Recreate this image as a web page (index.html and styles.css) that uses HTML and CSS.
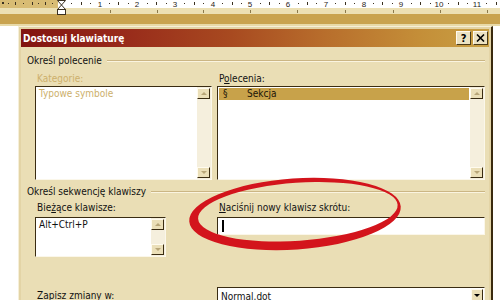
FILE: index.html
```html
<!DOCTYPE html>
<html lang="pl">
<head>
<meta charset="utf-8">
<title>Dostosuj klawiaturę</title>
<link rel="stylesheet" href="styles.css">
</head>
<body>
<svg class="ruler" width="500" height="26" viewBox="0 0 500 26">
  <rect width="500" height="8" fill="#ffffff"/>
  <rect width="58" height="8" fill="#d8bc74"/>
  <rect y="8" width="500" height="6" fill="#ece0b4"/>
  <rect y="14" width="500" height="10" fill="#c9a34f"/>
  <rect y="24" width="500" height="2" fill="#e8daa8"/>
  <g fill="#3a3020">
    <rect x="2" y="2" width="2" height="2"/>
    <rect x="8" y="3" width="1" height="1"/><rect x="15" y="2" width="1" height="3"/><rect x="23" y="3" width="1" height="1"/>
    <rect x="32" y="2" width="1" height="3"/><rect x="38" y="3" width="1" height="1"/><rect x="45" y="2" width="1" height="3"/><rect x="52" y="3" width="1" height="1"/>
    <rect x="71" y="3" width="1" height="1"/><rect x="81" y="2" width="1" height="3"/><rect x="90" y="3" width="1" height="1"/>
    <rect x="109" y="3" width="1" height="1"/><rect x="118" y="2" width="1" height="3"/><rect x="128" y="3" width="1" height="1"/>
    <rect x="147" y="3" width="1" height="1"/><rect x="156" y="2" width="1" height="3"/><rect x="166" y="3" width="1" height="1"/>
    <rect x="184" y="3" width="1" height="1"/><rect x="194" y="2" width="1" height="3"/><rect x="203" y="3" width="1" height="1"/>
    <rect x="222" y="3" width="1" height="1"/><rect x="232" y="2" width="1" height="3"/><rect x="241" y="3" width="1" height="1"/>
    <rect x="260" y="3" width="1" height="1"/><rect x="269" y="2" width="1" height="3"/><rect x="279" y="3" width="1" height="1"/>
    <rect x="298" y="3" width="1" height="1"/><rect x="307" y="2" width="1" height="3"/><rect x="316" y="3" width="1" height="1"/>
    <rect x="335" y="3" width="1" height="1"/><rect x="345" y="2" width="1" height="3"/><rect x="354" y="3" width="1" height="1"/>
    <rect x="373" y="3" width="1" height="1"/><rect x="382" y="2" width="1" height="3"/><rect x="392" y="3" width="1" height="1"/>
    <rect x="411" y="3" width="1" height="1"/><rect x="420" y="2" width="1" height="3"/><rect x="430" y="3" width="1" height="1"/>
    <rect x="448" y="3" width="1" height="1"/><rect x="458" y="2" width="1" height="3"/><rect x="467" y="3" width="1" height="1"/>
    <rect x="486" y="3" width="1" height="1"/><rect x="496" y="2" width="1" height="3"/>
  </g>
  <g fill="#8c7a4c">
    <rect x="110" y="10" width="1" height="3"/><rect x="157" y="10" width="1" height="3"/><rect x="203" y="10" width="1" height="3"/>
    <rect x="250" y="10" width="1" height="3"/><rect x="297" y="10" width="1" height="3"/><rect x="345" y="10" width="1" height="3"/>
    <rect x="393" y="10" width="1" height="3"/><rect x="440" y="10" width="1" height="3"/><rect x="487" y="10" width="1" height="3"/>
  </g>
  <g class="rnum" fill="#2a2418" text-anchor="middle">
    <text x="100" y="7">1</text><text x="137" y="7">2</text><text x="175" y="7">3</text><text x="213" y="7">4</text>
    <text x="250" y="7">5</text><text x="288" y="7">6</text><text x="326" y="7">7</text><text x="364" y="7">8</text>
    <text x="401" y="7">9</text><text x="439" y="7">10</text><text x="477" y="7">11</text>
  </g>
  <g fill="#ffffff" stroke="#3a3020" stroke-width="1">
    <polygon points="57.5,0.5 65.5,0.5 61.5,5"/>
    <polygon points="57.5,9.5 65.5,9.5 61.5,5"/>
    <rect x="57.5" y="9.5" width="8" height="5"/>
  </g>
</svg>
<div class="page">
  <div class="dialog">
    <div class="titlebar">
      <span class="title">Dostosuj klawiaturę</span>
      <div class="tbtns">
        <span class="tbtn">?</span>
        <span class="tbtn"><svg width="9" height="8" viewBox="0 0 9 8"><path d="M1 0.5 L8 7.5 M8 0.5 L1 7.5" stroke="#000" stroke-width="1.6"/></svg></span>
      </div>
    </div>
    <div class="body">
      <div class="sep"><span>Określ polecenie</span></div>
      <div class="row row1">
        <div class="col">
          <div class="label disabled">Kategorie:</div>
          <div class="list cat">
            <div class="items"><div class="item disabled">Typowe symbole</div></div>
            <div class="vscroll"><span class="sbtn up"></span><span class="strack"></span><span class="sbtn down"></span></div>
          </div>
        </div>
        <div class="col">
          <div class="label">P<u>o</u>lecenia:</div>
          <div class="list cmd">
            <div class="items"><div class="item sel"><span class="sym">§</span><span>Sekcja</span></div></div>
            <div class="vscroll"><span class="sbtn up"></span><span class="strack"></span><span class="sbtn down"></span></div>
          </div>
        </div>
      </div>
      <div class="sep sep2"><span>Określ sekwencję klawiszy</span></div>
      <div class="row row2">
        <div class="col">
          <div class="label">Bie<u>ż</u>ące klawisze:</div>
          <div class="list keys">
            <div class="items"><div class="item">Alt+Ctrl+P</div></div>
            <div class="vscroll"><span class="sbtn up"></span><span class="strack"></span><span class="sbtn down"></span></div>
          </div>
        </div>
        <div class="col">
          <div class="label"><u>N</u>aciśnij nowy klawisz skrótu:</div>
          <div class="input"><span class="caret"></span></div>
        </div>
      </div>
      <div class="row row3">
        <div class="col">
          <div class="label save">Zapisz zmiany w:</div>
        </div>
        <div class="col">
          <div class="combo"><span class="ctext">Normal.dot</span><span class="cbtn"></span></div>
        </div>
      </div>
    </div>
  </div>
</div>
<svg class="mark" width="500" height="300" viewBox="0 0 500 300">
  <path fill="#d3141c" fill-rule="evenodd" transform="rotate(-4 295 214)" d="M189,214 a106,35.5 0 1,0 212,0 a106,35.5 0 1,0 -212,0 Z M198,212 a100,29 0 1,0 200,0 a100,29 0 1,0 -200,0 Z"/>
</svg>
</body>
</html>
```
FILE: styles.css
```css
html, body {
  margin: 0;
  padding: 0;
}
body {
  width: 500px;
  height: 300px;
  overflow: hidden;
  position: relative;
  background: #ffffff;
  font-family: "DejaVu Sans Condensed", "Liberation Sans", Arial, sans-serif;
  font-size: 10px;
  color: #111;
}
.ruler {
  display: block;
}
.rnum {
  font-family: "Liberation Sans", Arial, sans-serif;
  font-size: 8px;
}
.page {
  padding-left: 18px;
}
.dialog {
  width: 475px;
  height: 274px;
  box-sizing: border-box;
  border-left: 1px solid #f6efd8;
  border-top: 1px solid #f6efd8;
  border-right: 2px solid #3a2a0e;
  background: #e3d4a6;
  padding: 2px 2px 0 2px;
  display: flex;
  flex-direction: column;
}
.titlebar {
  height: 18px;
  flex: none;
  display: flex;
  align-items: center;
  padding-left: 2px;
  background: linear-gradient(to right, #821410 0%, #97281a 20%, #a84a20 45%, #b86e2c 65%, #c48e38 85%, #c9a044 100%);
}
.title {
  color: #ffffff;
  font-weight: bold;
  font-size: 10px;
}
.tbtns {
  margin-left: auto;
  margin-right: 1px;
  display: flex;
  gap: 2px;
}
.tbtn {
  width: 15px;
  height: 14px;
  box-sizing: border-box;
  background: #ece2c2;
  border: 1px solid;
  border-color: #fffaf0 #4a3a18 #4a3a18 #fffaf0;
  display: flex;
  align-items: center;
  justify-content: center;
  font-weight: bold;
  font-size: 11px;
  color: #000;
}
.body {
  flex: 1;
  background: #eadeb5;
  padding: 7px 4px 0 6px;
  overflow: hidden;
}
.sep {
  display: flex;
  align-items: center;
  gap: 5px;
  line-height: 13px;
  height: 13px;
}
.sep::after {
  content: "";
  flex: 1;
  border-top: 1px solid #cbb684;
  border-bottom: 1px solid #faf4e0;
}
.sep2 {
  margin-top: 5px;
}
.row {
  display: grid;
  grid-template-columns: 182px 268px;
  margin-left: 8px;
}
.row1 {
  margin-top: 5px;
}
.row2 {
  margin-top: 3px;
}
.row3 {
  margin-top: 30px;
}
.label {
  line-height: 13px;
  height: 13px;
  padding-left: 2px;
  margin-bottom: 1px;
  white-space: nowrap;
}
.row2 .label {
  margin-bottom: 3px;
}
.label.save {
  padding-top: 2px;
}
.disabled {
  color: #cdb06c;
}
.list {
  display: flex;
  box-sizing: border-box;
  border: 1px solid;
  border-color: #3a2c12 #fbf7ea #fbf7ea #3a2c12;
  background: #ffffff;
}
.cat {
  width: 177px;
  height: 94px;
}
.cmd {
  width: 268px;
  height: 94px;
}
.keys {
  width: 131px;
  height: 40px;
}
.items {
  flex: 1;
  padding: 1px;
}
.item {
  line-height: 12px;
  height: 12px;
  padding-left: 2px;
  white-space: nowrap;
}
.item.sel {
  background: #c8a24a;
  display: flex;
  padding-left: 4px;
  color: #1a1408;
}
.sym {
  width: 24px;
}
.vscroll {
  width: 13px;
  display: flex;
  flex-direction: column;
  background: #f5efdd;
  padding: 1px 1px 1px 0;
}
.strack {
  flex: 1;
}
.sbtn {
  height: 11px;
  box-sizing: border-box;
  background: #ebdfb8;
  border: 1px solid;
  border-color: #fffbee #3a2c12 #3a2c12 #fffbee;
  display: flex;
  align-items: center;
  justify-content: center;
}
.sbtn::after {
  content: "";
  width: 0;
  height: 0;
  border-left: 3px solid transparent;
  border-right: 3px solid transparent;
}
.sbtn.up::after {
  border-bottom: 3px solid #b8a678;
}
.sbtn.down::after {
  border-top: 3px solid #b8a678;
}
.input {
  width: 268px;
  height: 18px;
  box-sizing: border-box;
  border: 1px solid;
  border-color: #3a2c12 #fbf7ea #fbf7ea #3a2c12;
  background: #ffffff;
  padding: 2px 0 0 4px;
}
.caret {
  display: block;
  width: 2px;
  height: 12px;
  background: #000;
}
.combo {
  width: 268px;
  height: 20px;
  box-sizing: border-box;
  border: 1px solid;
  border-color: #3a2c12 #fbf7ea #fbf7ea #3a2c12;
  background: #ffffff;
  display: flex;
  align-items: flex-start;
  padding: 1px 1px 0 3px;
}
.ctext {
  flex: 1;
  line-height: 13px;
  padding-top: 1px;
}
.cbtn {
  width: 12px;
  height: 13px;
  box-sizing: border-box;
  background: #ebdfb8;
  border: 1px solid;
  border-color: #fffbee #3a2c12 #3a2c12 #fffbee;
  display: flex;
  align-items: center;
  justify-content: center;
}
.cbtn::after {
  content: "";
  width: 0;
  height: 0;
  border-left: 3px solid transparent;
  border-right: 3px solid transparent;
  border-top: 3px solid #000;
}
.mark {
  position: absolute;
  left: 0;
  top: 0;
  pointer-events: none;
}
```
